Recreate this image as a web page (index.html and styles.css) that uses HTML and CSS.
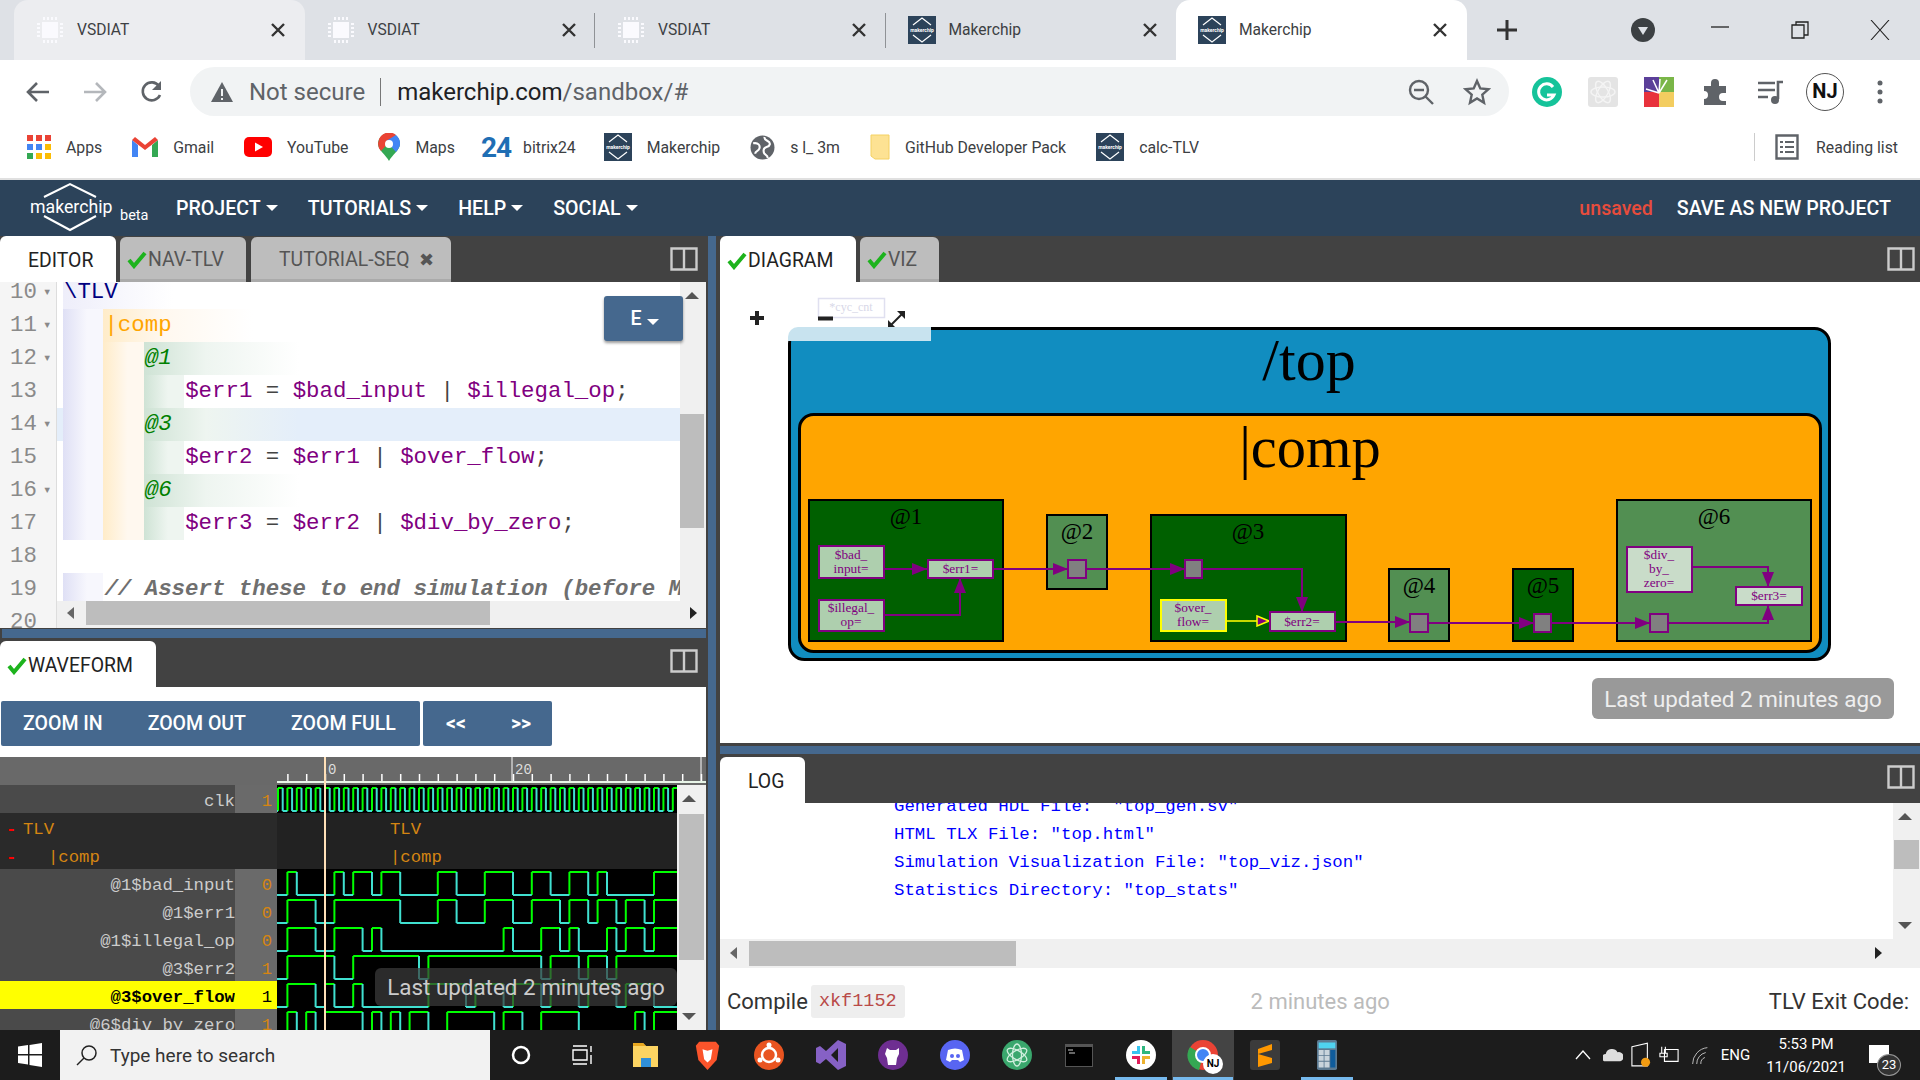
FILE: index.html
```html
<!DOCTYPE html>
<html lang="en">
  <head>
    <meta charset="UTF-8" />
    <title>Makerchip</title>
    <link rel="stylesheet" href="styles.css">
  </head>
  <body>
    <svg class="defs" width="0" height="0">
      <symbol id="mk" viewBox="0 0 28 28">
        <rect width="28" height="28" fill="#2c435a" />
        <path d="M5 9 14 2l9 7M5 19l9 7 9-7" fill="none" stroke="#fff" stroke-width="1.2" />
      </symbol>
      <symbol id="chip" viewBox="0 0 28 28">
        <rect x="6" y="6" width="16" height="16" fill="#fafafe" />
        <path d="M8 1v3m4-3v3m4-3v3m4-3v3M8 24v3m4-3v3m4-3v3m4-3v3M1 8h3m-3 4h3m-3 4h3m-3 4h3M24 8h3m-3 4h3m-3 4h3m-3 4h3" stroke="#fafafe" stroke-width="2" />
      </symbol>
      <symbol id="x" viewBox="0 0 16 16">
        <path d="M2 2 14 14M14 2 2 14" stroke="#333" stroke-width="2.4" />
      </symbol>
      <symbol id="ok" viewBox="0 0 20 20">
        <path d="M2 11l5 6L18 4" fill="none" stroke="#1db31d" stroke-width="4" />
      </symbol>
      <symbol id="split" viewBox="0 0 28 24">
        <path d="M1.5 1.5h25v21h-25zM14 1.5v21" fill="none" stroke="#ccc" stroke-width="2.4" />
      </symbol>
    </svg>

    <div class="tabstrip">
      <div class="ctab hover"><svg class="fav"><use href="#chip" /></svg><span>VSDIAT</span><svg class="cx"><use href="#x" /></svg></div>
      <div class="ctab"><svg class="fav"><use href="#chip" /></svg><span>VSDIAT</span><svg class="cx"><use href="#x" /></svg></div>
      <div class="ctab sep"><svg class="fav"><use href="#chip" /></svg><span>VSDIAT</span><svg class="cx"><use href="#x" /></svg></div>
      <div class="ctab sep"><svg class="fav" viewBox="0 0 28 28"><use href="#mk" /><text x="14" y="16" class="mk-t">makerchip</text></svg><span>Makerchip</span><svg class="cx"><use href="#x" /></svg></div>
      <div class="ctab active"><svg class="fav" viewBox="0 0 28 28"><use href="#mk" /><text x="14" y="16" class="mk-t">makerchip</text></svg><span>Makerchip</span><svg class="cx"><use href="#x" /></svg></div>
      <svg class="newtab" width="24" height="24" viewBox="0 0 24 24"><path d="M12 2v20M2 12h20" stroke="#333" stroke-width="3" /></svg>
      <svg class="tabmenu" width="24" height="24" viewBox="0 0 24 24"><circle cx="12" cy="12" r="12" fill="#3c4043" /><path d="M7 9h10l-5 8z" fill="#dee1e6" /></svg>
      <svg class="winbtn" width="20" height="20" viewBox="0 0 20 20"><path d="M1 7h18" stroke="#222" stroke-width="1.3" /></svg>
      <svg class="winbtn" width="20" height="20" viewBox="0 0 20 20"><path d="M2 5h12v13H2zM6 5V2h12v13h-4" fill="none" stroke="#222" stroke-width="1.3" /></svg>
      <svg class="winbtn" width="20" height="20" viewBox="0 0 20 20"><path d="M1 0l18 20M19 0 1 20" stroke="#222" stroke-width="1.1" /></svg>
    </div>

    <div class="toolbar">
      <svg class="tool first" width="26" height="26" viewBox="0 0 26 26"><path d="M24 13H4M12 4l-9 9 9 9" fill="none" stroke="#5f6368" stroke-width="2.6" /></svg>
      <svg class="tool" width="26" height="26" viewBox="0 0 26 26"><path d="M2 13h20M14 4l9 9-9 9" fill="none" stroke="#b4b7bb" stroke-width="2.6" /></svg>
      <svg class="tool" width="26" height="26" viewBox="0 0 26 26"><path d="M21 16a9 9 0 1 1-1-9" fill="none" stroke="#5f6368" stroke-width="2.6" /><path d="M22 2v9h-9z" fill="#5f6368" /></svg>
      <div class="omni">
        <svg width="24" height="22" viewBox="0 0 24 22"><path d="M12 1 23 21H1z" fill="#5f6368" /><path d="M12 8v7m0 2v2" stroke="#f1f3f4" stroke-width="2" /></svg>
        <span class="notsec">Not secure</span>
        <span class="url">makerchip.com<span class="path">/sandbox/#</span></span>
        <svg class="omni-zoom" width="28" height="28" viewBox="0 0 28 28"><circle cx="12" cy="12" r="9" fill="none" stroke="#5f6368" stroke-width="2.4" /><path d="M7 12h10M18 18l8 8" stroke="#5f6368" stroke-width="2.4" /></svg>
        <svg class="omni-star" width="28" height="28" viewBox="0 0 28 28"><path d="M14 3l3.300 7.500 8 .8-6 5.400 1.700 8L14 20.500 7 24.700l1.700-8-6-5.400 8-.8z" fill="none" stroke="#5f6368" stroke-width="2.4" /></svg>
      </div>
      <svg class="ext" width="30" height="30" viewBox="0 0 30 30"><circle cx="15" cy="15" r="15" fill="#15c39a" /><path d="M21 10a8 8 0 1 0 1 8h-7" fill="none" stroke="#fff" stroke-width="3" /></svg>
      <svg class="ext" width="30" height="30" viewBox="0 0 30 30"><rect width="30" height="30" rx="3" fill="#e4e4e4" /><g fill="none" stroke="#f4f4f4" stroke-width="1.400"><ellipse cx="15" cy="15" rx="12" ry="5" /><ellipse cx="15" cy="15" rx="12" ry="5" transform="rotate(60 15 15)" /><ellipse cx="15" cy="15" rx="12" ry="5" transform="rotate(120 15 15)" /></g></svg>
      <svg class="ext" width="30" height="30" viewBox="0 0 30 30"><rect width="15" height="15" fill="#5b3f99" /><rect x="15" width="15" height="15" fill="#7ab648" /><rect y="15" width="15" height="15" fill="#e8323c" /><rect x="15" y="15" width="15" height="15" fill="#f3cd60" /><path d="M15 16 9 3m6 13 1-14m-1 14 8-13M15 16 2 12" stroke="#fff" stroke-width="1.500" /></svg>
      <svg class="ext" width="30" height="30" viewBox="0 0 30 30"><path d="M4 9h7V6a4 4 0 0 1 8 0v3h7v7h-3a4 4 0 0 0 0 8h3v4H4v-6a4 4 0 0 0 0-8z" fill="#5f6368" /></svg>
      <svg class="ext" width="30" height="30" viewBox="0 0 30 30"><path d="M2 6h17M2 13h17M2 20h10" stroke="#5f6368" stroke-width="2.600" /><path d="M22 22V5h5" fill="none" stroke="#5f6368" stroke-width="2.600" /><circle cx="19" cy="23" r="4" fill="#5f6368" /></svg>
      <div class="avatar">NJ</div>
      <svg class="dots" width="6" height="24" viewBox="0 0 6 24"><circle cx="3" cy="3" r="2.500" fill="#5f6368" /><circle cx="3" cy="12" r="2.500" fill="#5f6368" /><circle cx="3" cy="21" r="2.500" fill="#5f6368" /></svg>
    </div>

    <div class="bookmarks">
      <div class="bm"><svg width="24" height="24" viewBox="0 0 24 24"><path fill="#ea4335" d="M0 0h6v6H0zM9 0h6v6H9zM18 0h6v6h-6z" /><path fill="#4285f4" d="M0 9h6v6H0zM9 9h6v6H9z" /><path fill="#fbbc05" d="M18 9h6v6h-6zM9 18h6v6H9zM18 18h6v6h-6z" /><path fill="#34a853" d="M0 18h6v6H0z" /></svg><span>Apps</span></div>
      <div class="bm"><svg width="26" height="20" viewBox="0 0 26 20"><path d="M0 3v17h6V8z" fill="#4285f4" /><path d="M26 3v17h-6V8z" fill="#34a853" /><path d="M0 3l3-3 10 8L23 0l3 3-13 10z" fill="#ea4335" /></svg><span>Gmail</span></div>
      <div class="bm"><svg width="28" height="20" viewBox="0 0 28 20"><rect width="28" height="20" rx="5" fill="#f00" /><path d="M11 5.500l8 4.500-8 4.500z" fill="#fff" /></svg><span>YouTube</span></div>
      <div class="bm"><svg width="22" height="28" viewBox="0 0 22 28"><path d="M11 0a11 11 0 0 1 11 11c0 6-8 11-11 17C8 22 0 17 0 11A11 11 0 0 1 11 0z" fill="#34a853" /><path d="M3 3a11 11 0 0 1 15-1L3 18a11 11 0 0 1 0-15z" fill="#ea4335" /><path d="M18 2a11 11 0 0 1 4 9c0 3-2 5-4 8L8 8z" fill="#4285f4" /><circle cx="11" cy="11" r="4" fill="#fff" /></svg><span>Maps</span></div>
      <div class="bm bitrix"><b class="b24">24</b><span>bitrix24</span></div>
      <div class="bm"><svg width="28" height="28" viewBox="0 0 28 28"><use href="#mk" /><text x="14" y="16" class="mk-t">makerchip</text></svg><span>Makerchip</span></div>
      <div class="bm"><svg width="25" height="25" viewBox="0 0 24 24"><circle cx="12" cy="12" r="11.500" fill="#5f6368" /><path d="M3 8c5-1 7 2 6 5s-4 2-4 5M14 2c-1 4 6 3 5 7s-6 1-6 6 4 3 4 7" fill="none" stroke="#fff" stroke-width="2" /></svg><span>s l_ 3m</span></div>
      <div class="bm"><svg width="20" height="26" viewBox="0 0 20 26"><path d="M1 1h18v24H5l-4-3z" fill="#fde293" stroke="#f4d162" /></svg><span>GitHub Developer Pack</span></div>
      <div class="bm"><svg width="28" height="28" viewBox="0 0 28 28"><use href="#mk" /><text x="14" y="16" class="mk-t">makerchip</text></svg><span>calc-TLV</span></div>
      <div class="bm reading"><svg width="24" height="26" viewBox="0 0 24 26"><path d="M1.500 1.500h21v23h-21z" fill="none" stroke="#5f6368" stroke-width="2.400" /><path d="M5 8h3m2 0h9M5 13h3m2 0h9M5 18h3m2 0h9" stroke="#5f6368" stroke-width="2" /></svg><span>Reading list</span></div>
    </div>

    <div class="nav">
      <div class="logo">
        <svg width="90" height="50" viewBox="0 0 90 50"><path d="M24 15 50 2l26 13M24 34l26 14 26-14" fill="none" stroke="#fff" stroke-width="2" /></svg>
        <span class="logo-name">makerchip</span>
      </div>
      <span class="beta">beta</span>
      <a class="nav-item">PROJECT<i class="caret"></i></a>
      <a class="nav-item">TUTORIALS<i class="caret"></i></a>
      <a class="nav-item">HELP<i class="caret"></i></a>
      <a class="nav-item">SOCIAL<i class="caret"></i></a>
      <span class="unsaved">unsaved</span>
      <a class="nav-save">SAVE AS NEW PROJECT</a>
    </div>

    <div class="main">
      <div class="col-left">
        <div class="tabbar">
          <div class="mtab on w-editor">EDITOR</div>
          <div class="mtab w-nav"><svg class="ok"><use href="#ok" /></svg>NAV-TLV</div>
          <div class="mtab w-seq">TUTORIAL-SEQ<span class="seq-x">✖</span></div>
          <svg class="split"><use href="#split" /></svg>
        </div>

        <div class="editor">
          <div class="line"><span class="ln">10<i>▾</i></span><span class="ind first grad-tlv kw-tlv">\TLV</span></div>
          <div class="line"><span class="ln">11<i>▾</i></span><span class="ind first tlv"></span><span class="ind grad-pipe kw-pipe">|comp</span></div>
          <div class="line"><span class="ln">12<i>▾</i></span><span class="ind first tlv"></span><span class="ind pipe"></span><span class="ind grad-stage kw-stage">@1</span></div>
          <div class="line"><span class="ln">13</span><span class="ind first tlv"></span><span class="ind pipe"></span><span class="ind stage"></span><span class="code"><em>$err1</em> = <em>$bad_input</em> | <em>$illegal_op</em>;</span></div>
          <div class="line cur"><span class="ln">14<i>▾</i></span><span class="ind first tlv"></span><span class="ind pipe"></span><span class="ind grad-stage kw-stage">@3</span></div>
          <div class="line"><span class="ln">15</span><span class="ind first tlv"></span><span class="ind pipe"></span><span class="ind stage"></span><span class="code"><em>$err2</em> = <em>$err1</em> | <em>$over_flow</em>;</span></div>
          <div class="line"><span class="ln">16<i>▾</i></span><span class="ind first tlv"></span><span class="ind pipe"></span><span class="ind grad-stage kw-stage">@6</span></div>
          <div class="line"><span class="ln">17</span><span class="ind first tlv"></span><span class="ind pipe"></span><span class="ind stage"></span><span class="code"><em>$err3</em> = <em>$err2</em> | <em>$div_by_zero</em>;</span></div>
          <div class="line"><span class="ln">18</span></div>
          <div class="line"><span class="ln">19</span><span class="ind first tlv"></span><span class="comment">// Assert these to end simulation (before Makerchip cycle limit).</span></div>
          <div class="line"><span class="ln">20</span></div>
          <div class="vbar ed-v"><i class="up"></i><b></b></div>
          <div class="hbar ed-h"><i class="lt"></i><b></b><i class="rt"></i></div>
          <button class="ebtn">E<i class="caret"></i></button>
        </div>

        <div class="hsplit"></div>

        <div class="tabbar short">
          <div class="mtab on w-wave"><svg class="ok"><use href="#ok" /></svg>WAVEFORM</div>
          <svg class="split"><use href="#split" /></svg>
        </div>

        <div class="wavepane">
          <div class="wave-btns">
            <div class="btn-group"><a>ZOOM IN</a><a>ZOOM OUT</a><a>ZOOM FULL</a></div>
            <div class="btn-group two"><a>&lt;&lt;</a><a>&gt;&gt;</a></div>
          </div>
          <div class="wave">
            <div class="ruler">
              <svg width="429" height="26" viewBox="0 0 429 26" id="ruler"></svg>
            </div>
            <div id="rows"></div>
            <div class="cursor"></div>
            <div class="vbar wf-v"><i class="up"></i><b></b><i class="down"></i></div>
            <div class="toast dark">Last updated 2 minutes ago</div>
          </div>
        </div>
      </div>

      <div class="vsplit"></div>

      <div class="col-right">
        <div class="tabbar">
          <div class="mtab on w-diag"><svg class="ok"><use href="#ok" /></svg>DIAGRAM</div>
          <div class="mtab w-viz"><svg class="ok"><use href="#ok" /></svg>VIZ</div>
          <svg class="split"><use href="#split" /></svg>
        </div>

        <div class="diagram">
          <svg class="graph" width="1200" height="460" viewBox="720 282 1200 460">
            <defs>
              <marker id="arr" markerWidth="15" markerHeight="12" refX="15" refY="6" orient="auto" markerUnits="userSpaceOnUse"><path d="M0 0 15 6 0 12z" fill="#800080" /></marker>
              <marker id="arry" markerWidth="14" markerHeight="12" refX="14" refY="6" orient="auto" markerUnits="userSpaceOnUse"><path d="M1 1 13 6 1 11z" fill="#800080" stroke="#ff0" stroke-width="1.500" /></marker>
            </defs>
            <path d="M750 318h14M757 311v14" stroke="#222" stroke-width="4" />
            <rect x="818.500" y="298.500" width="66" height="19" fill="#fff" stroke="#e0e0f0" stroke-width="1.500" />
            <text x="851" y="311" class="cyc">*cyc_cnt</text>
            <path d="M818 318.500h15" stroke="#222" stroke-width="4" />
            <path d="M889 327l15-15" stroke="#222" stroke-width="2" /><path d="M888 328v-8l8 8zM905 311v8l-8-8z" fill="#222" />

            <rect x="789.500" y="328.500" width="1040" height="331" rx="15" fill="#118dc0" stroke="#000" stroke-width="3" />
            <path d="M788 341v-4a10 10 0 0 1 10-10h133v14z" fill="#c8e3ef" />
            <text x="1309" y="380" class="t-top">/top</text>
            <rect x="799.500" y="414.500" width="1021" height="237" rx="14" fill="#ffa500" stroke="#000" stroke-width="3" />
            <text x="1310" y="467" class="t-top comp">|comp</text>

            <rect x="809" y="500" width="194" height="141" class="st" />
            <rect x="1047" y="515" width="60" height="74" class="st lite" />
            <rect x="1151" y="515" width="195" height="126" class="st" />
            <rect x="1389" y="569" width="60" height="72" class="st lite" />
            <rect x="1513" y="569" width="60" height="72" class="st" />
            <rect x="1617" y="500" width="194" height="141" class="st lite" />
            <text x="906" y="524" class="stage">@1</text>
            <text x="1077" y="539" class="stage">@2</text>
            <text x="1248" y="539" class="stage">@3</text>
            <text x="1419" y="593" class="stage">@4</text>
            <text x="1543" y="593" class="stage">@5</text>
            <text x="1714" y="524" class="stage">@6</text>

            <g fill="none" stroke="#800080" stroke-width="2">
              <path d="M884 569H927" marker-end="url(#arr)" />
              <path d="M884 615H960V578" marker-end="url(#arr)" />
              <path d="M993 569H1068" marker-end="url(#arr)" />
              <path d="M1086 569H1185" marker-end="url(#arr)" />
              <path d="M1202 569H1302V612" marker-end="url(#arr)" />
              <path d="M1335 622H1410" marker-end="url(#arr)" />
              <path d="M1428 623H1534" marker-end="url(#arr)" />
              <path d="M1551 623H1650" marker-end="url(#arr)" />
              <path d="M1668 623H1768V605" marker-end="url(#arr)" />
              <path d="M1692 567H1768V587" marker-end="url(#arr)" />
              <path d="M1226 621H1270" stroke="#c8d800" marker-end="url(#arry)" />
            </g>

            <rect x="819" y="546" width="65" height="32" class="nd" />
            <rect x="928" y="560" width="65" height="18" class="nd" />
            <rect x="819" y="600" width="65" height="31" class="nd" />
            <rect x="1161" y="600" width="65" height="31" class="nd yel" />
            <rect x="1270" y="612" width="65" height="19" class="nd" />
            <rect x="1627" y="547" width="65" height="45" class="nd pale" />
            <rect x="1736" y="587" width="66" height="18" class="nd pale" />
            <rect x="1068" y="560" width="18" height="18" class="sq" />
            <rect x="1185" y="560" width="17" height="18" class="sq" />
            <rect x="1410" y="614" width="18" height="18" class="sq" />
            <rect x="1534" y="614" width="17" height="18" class="sq" />
            <rect x="1650" y="614" width="18" height="18" class="sq" />

            <text x="851" y="559" class="lbl">$bad_</text><text x="851" y="573" class="lbl">input=</text>
            <text x="960.500" y="573" class="lbl">$err1=</text>
            <text x="851" y="612" class="lbl">$illegal_</text><text x="851" y="626" class="lbl">op=</text>
            <text x="1193" y="612" class="lbl">$over_</text><text x="1193" y="626" class="lbl">flow=</text>
            <text x="1302" y="626" class="lbl">$err2=</text>
            <text x="1659" y="559" class="lbl">$div_</text><text x="1659" y="573" class="lbl">by_</text><text x="1659" y="587" class="lbl">zero=</text>
            <text x="1769" y="600" class="lbl">$err3=</text>
          </svg>
          <div class="toast light">Last updated 2 minutes ago</div>
        </div>

        <div class="hsplit wide"></div>

        <div class="tabbar short">
          <div class="mtab on w-log">LOG</div>
          <svg class="split"><use href="#split" /></svg>
        </div>

        <div class="log">
          <pre class="log-text">Generated HDL File:  "top_gen.sv"
HTML TLX File: "top.html"
Simulation Visualization File: "top_viz.json"
Statistics Directory: "top_stats"</pre>
          <div class="vbar log-v"><i class="up"></i><b></b><i class="down"></i></div>
          <div class="hbar log-h"><i class="lt"></i><b></b><i class="rt"></i></div>
        </div>

        <div class="status">
          <span>Compile</span><code>xkf1152</code>
          <span class="ago">2 minutes ago</span>
          <span class="exit">TLV Exit Code:</span>
        </div>
      </div>
    </div>

    <div class="taskbar">
      <svg class="win" width="24" height="24" viewBox="0 0 24 24"><path d="M0 3.500l10-1.400V11H0zM11.500 2 24 0v11H11.500zM0 12.500h10v9L0 20zM11.500 12.500H24V24l-12.500-2z" fill="#fff" /></svg>
      <div class="search">
        <svg width="22" height="22" viewBox="0 0 22 22"><circle cx="13" cy="9" r="7" fill="none" stroke="#222" stroke-width="1.500" /><path d="M8 14 1 21" stroke="#222" stroke-width="1.500" /></svg>
        <span>Type here to search</span>
      </div>
      <div class="tb"><svg width="22" height="22" viewBox="0 0 22 22"><circle cx="11" cy="11" r="8" fill="none" stroke="#fff" stroke-width="2.500" /></svg></div>
      <div class="tb"><svg width="22" height="22" viewBox="0 0 22 22"><path d="M1 6h14v10H1zM1 2h14M1 20h14M19 2v6M19 11v9" fill="none" stroke="#fff" stroke-width="1.400" /></svg></div>
      <div class="tb"><svg width="27" height="24" viewBox="0 0 27 24"><path d="M1 0h10l3 3h12v21H1z" fill="#fcd462" /><path d="M1 0h10l3 3H1z" fill="#e8a820" /><path d="M9 24V15h10v9z" fill="#2f8fd8" /></svg></div>
      <div class="tb"><svg width="27" height="30" viewBox="0 0 30 36"><path d="M5 2h20l4 5-3 17-11 12L4 24 1 7z" fill="#fb542b" /><path d="M9 11l6 2 6-2-2 12-4 4-4-4z" fill="#fff" /></svg></div>
      <div class="tb"><svg width="30" height="30" viewBox="0 0 30 30"><circle cx="15" cy="15" r="15" fill="#e95420" /><circle cx="15" cy="15" r="7" fill="none" stroke="#fff" stroke-width="2.500" /><circle cx="15" cy="5" r="2.500" fill="#fff" /><circle cx="6" cy="20" r="2.500" fill="#fff" /><circle cx="24" cy="20" r="2.500" fill="#fff" /></svg></div>
      <div class="tb"><svg width="30" height="30" viewBox="0 0 30 30"><path d="M22 0 30 4v22l-8 4-12-11-6 5-4-2V8l4-2 6 5zM22 8l-7 7 7 7z" fill="#8661c5" /></svg></div>
      <div class="tb"><svg width="30" height="30" viewBox="0 0 30 30"><circle cx="15" cy="15" r="15" fill="#6e2e91" /><path d="M9 8l3 2h6l3-2v6l-2 4 -1 7h-8l-1-7-2-4z" fill="#fff" /></svg></div>
      <div class="tb"><svg width="30" height="30" viewBox="0 0 30 30"><circle cx="15" cy="15" r="15" fill="#5865f2" /><path d="M8 10q7-3 14 0l2 10-4 2-2-2h-6l-2 2-4-2z" fill="#fff" /><circle cx="12" cy="16" r="2" fill="#5865f2" /><circle cx="18" cy="16" r="2" fill="#5865f2" /></svg></div>
      <div class="tb"><svg width="30" height="30" viewBox="0 0 30 30"><circle cx="15" cy="15" r="15" fill="#3aa76d" /><g fill="none" stroke="#cfeedd" stroke-width="1.300"><ellipse cx="15" cy="15" rx="11" ry="4.500" transform="rotate(30 15 15)" /><ellipse cx="15" cy="15" rx="11" ry="4.500" transform="rotate(90 15 15)" /><ellipse cx="15" cy="15" rx="11" ry="4.500" transform="rotate(150 15 15)" /></g></svg></div>
      <div class="tb"><svg width="28" height="23" viewBox="0 0 28 23"><rect width="28" height="23" fill="#555" /><rect x="1" y="3" width="26" height="19" fill="#000" /><path d="M3 6h5M4 9h6" stroke="#ccc" /></svg></div>
      <div class="tb run"><svg width="30" height="30" viewBox="0 0 30 30"><circle cx="15" cy="15" r="15" fill="#fff" /><rect x="6" y="11" width="8" height="3" fill="#36c5f0" /><rect x="11" y="6" width="3" height="5" fill="#36c5f0" /><rect x="16" y="6" width="3" height="8" fill="#2eb67d" /><rect x="19" y="11" width="5" height="3" fill="#2eb67d" /><rect x="16" y="16" width="8" height="3" fill="#ecb22e" /><rect x="16" y="19" width="3" height="5" fill="#ecb22e" /><rect x="11" y="16" width="3" height="8" fill="#e01e5a" /><rect x="6" y="16" width="5" height="3" fill="#e01e5a" /></svg></div>
      <div class="tb run focus">
        <svg width="32" height="32" viewBox="0 0 32 32"><circle cx="16" cy="16" r="15" fill="#ea4335" /><path d="M16 16 3 8a15 15 0 0 0 9 23z" fill="#34a853" /><circle cx="16" cy="16" r="7" fill="#4285f4" stroke="#fff" stroke-width="2" /></svg>
        <span class="nj-mini">NJ</span>
      </div>
      <div class="tb"><svg width="30" height="30" viewBox="0 0 30 30"><rect width="30" height="30" rx="3" fill="#3b3b3b" /><path d="M22 5v6L8 15v-5zM8 15l14 4v5L8 28v-5" fill="#ff9800" transform="translate(0 -1)" /></svg></div>
      <div class="tb run"><svg width="24" height="30" viewBox="0 0 24 36"><rect width="24" height="36" rx="2" fill="#5c7a92" /><rect x="2" y="3" width="20" height="7" fill="#4fd2f0" /><path d="M2 12h6v6H2zM9 12h6v6H9zM2 19h6v6H2zM9 19h6v6H9zM2 26h6v7H2zM9 26h6v7H9z" fill="#c9d4dc" /><path d="M16 12h6v21h-6z" fill="#0f5c9c" /></svg></div>

      <div class="tray">
        <svg width="16" height="10" viewBox="0 0 16 10"><path d="M1 9l7-8 7 8" fill="none" stroke="#fff" stroke-width="1.300" /></svg>
        <svg class="tray-tight" width="20" height="16" viewBox="0 0 22 16"><path d="M3 15a4 4 0 0 1 0-8 7 7 0 0 1 13-2 5 5 0 0 1 3 10z" fill="#ddd" /></svg>
        <svg class="tray-tight" width="20" height="26" viewBox="0 0 22 28"><path d="M1 5 18 1v25H1z" fill="none" stroke="#fff" stroke-width="1.200" /><circle cx="16" cy="22" r="5" fill="#f39c12" /></svg>
        <svg width="20" height="20" viewBox="0 0 22 20"><path d="M6 4h15v13H6zM3 1v7M7 1v7M1 8h8v4H1z" fill="none" stroke="#fff" stroke-width="1.200" /></svg>
        <svg width="18" height="22" viewBox="0 0 22 24"><path d="M2 23a20 20 0 0 1 18-20M7 23a14 14 0 0 1 11-14M12 23a8 8 0 0 1 5-8" fill="none" stroke="#bbb" stroke-width="1.200" /></svg>
        <span class="lang">ENG</span>
        <div class="clock"><span>5:53 PM</span><span>11/06/2021</span></div>
        <div class="notif"><span class="note"></span><span class="count">23</span></div>
      </div>
    </div>

    <script src="wave.js"></script>
  </body>
</html>
```

FILE: styles.css
```css
* {
  box-sizing: border-box;
}

html,
body {
  margin: 0;
  width: 1920px;
  height: 1080px;
  overflow: hidden;
}

body {
  font-family: Roboto, sans-serif;
  background-color: white;
}

.defs {
  position: absolute;
}

.mk-t {
  font-family: Roboto, sans-serif;
  font-size: 5px;
  font-weight: 700;
  fill: white;
  text-anchor: middle;
}

/* browser chrome */
.tabstrip {
  display: flex;
  align-items: center;
  height: 60px;
  padding-left: 14px;
  background-color: #dee1e6;
}

.ctab {
  display: flex;
  align-items: center;
  position: relative;
  width: 290.5px;
  height: 60px;
  padding-left: 22px;
  font-size: 15.6px;
  color: #3c4043;
}

.ctab.hover {
  background-color: #ecedf0;
  border-radius: 14px 14px 0 0;
}

.ctab.active {
  background-color: white;
  border-radius: 14px 14px 0 0;
}

.ctab.sep::before {
  content: '';
  position: absolute;
  left: -1px;
  top: 13px;
  height: 35px;
  width: 1px;
  background-color: #8f9296;
}

.fav {
  width: 28px;
  height: 28px;
  margin-right: 13px;
}

.cx {
  position: absolute;
  left: 256px;
  top: 22px;
  width: 16px;
  height: 16px;
}

.newtab {
  margin-left: 28px;
}

.tabmenu {
  margin-left: 112px;
}

.winbtn {
  margin-left: 60px;
}

.tabmenu + .winbtn {
  margin-left: 55px;
}

.toolbar {
  display: flex;
  align-items: center;
  height: 58px;
  padding-top: 5px;
}

.tool {
  margin-left: 31px;
}

.tool.first {
  margin-left: 25px;
}

.omni {
  display: flex;
  align-items: center;
  width: 1319px;
  height: 49px;
  margin-left: 25px;
  padding-left: 20px;
  border-radius: 25px;
  background-color: #f1f3f4;
  font-size: 24px;
  position: relative;
}

.notsec {
  margin-left: 15px;
  padding-right: 15px;
  border-right: 1px solid #777;
  color: #5f6368;
  line-height: 28px;
}

.url {
  margin-left: 16px;
  color: #202124;
}

.path {
  color: #5f6368;
}

.omni-zoom {
  margin-left: auto;
}

.omni-star {
  margin: 0 18px 0 28px;
}

.ext {
  margin-left: 26px;
}

.omni + .ext {
  margin-left: 23px;
}

.avatar {
  width: 38px;
  height: 38px;
  margin-left: 20px;
  border: 1.5px solid #555;
  border-radius: 50%;
  font-size: 20px;
  font-weight: 700;
  line-height: 35px;
  text-align: center;
  color: #111;
}

.dots {
  margin-left: 33px;
}

.bookmarks {
  display: flex;
  align-items: center;
  gap: 30px;
  height: 62px;
  padding: 0 22px 2px 27px;
  border-bottom: 2px solid #e0e0e0;
  font-size: 15.8px;
  color: #3c4043;
}

.bm {
  display: flex;
  align-items: center;
  gap: 15px;
}

.bitrix {
  margin: 0 -2px 0 -4px;
  gap: 12px;
}

.b24 {
  font-size: 28px;
  color: #1f6eb4;
  letter-spacing: -1px;
}

.reading {
  margin-left: auto;
  padding-left: 20px;
  height: 28px;
  gap: 17px;
  border-left: 1px solid #ccc;
}

/* makerchip nav */
.nav {
  display: flex;
  align-items: center;
  height: 56px;
  background-color: #2c435a;
  color: white;
  position: relative;
}

.logo {
  position: relative;
  width: 100px;
  height: 48px;
  margin-left: 20px;
}

.logo svg {
  position: absolute;
  left: 0;
  top: -2px;
}

.logo-name {
  position: absolute;
  left: 10px;
  top: 13px;
  font-size: 17.7px;
}

.beta {
  width: 56px;
  margin-top: 14px;
  font-size: 14.5px;
}

.nav-item {
  display: flex;
  align-items: center;
  margin-right: 30px;
  font-size: 19.6px;
  font-weight: 500;
}

.caret {
  display: inline-block;
  margin-left: 5px;
  border-top: 6px solid currentColor;
  border-left: 6px solid transparent;
  border-right: 6px solid transparent;
}

.unsaved {
  margin-left: auto;
  font-size: 19.6px;
  font-weight: 500;
  color: #e74c3c;
}

.nav-save {
  margin: 0 29px 0 24px;
  font-size: 19.6px;
  font-weight: 500;
}

/* panes */
.main {
  display: flex;
  height: 794px;
  background-color: #424242;
}

.col-left {
  width: 706px;
  display: flex;
  flex-direction: column;
}

.vsplit {
  width: 8px;
  margin: 0 4px 0 2px;
  background-color: #45688e;
}

.col-right {
  flex: 1;
  display: flex;
  flex-direction: column;
}

.tabbar {
  display: flex;
  align-items: flex-end;
  gap: 4px;
  flex: none;
  height: 46px;
  position: relative;
  background-color: #424242;
}

.tabbar.short {
  height: 49px;
}

.mtab {
  display: flex;
  align-items: center;
  height: 45px;
  padding-top: 2px;
  padding-left: 7px;
  background-color: #bdbdbd;
  border-bottom: 3px solid #aaa;
  border-radius: 6px 6px 0 0;
  font-size: 19.4px;
  color: #555;
}

.mtab.on {
  height: 46px;
  background-color: white;
  border-bottom: 0;
  color: #222;
}

.w-editor {
  width: 116px;
  padding-left: 28px;
}

.w-nav {
  width: 126px;
}

.w-seq {
  width: 200px;
  margin-left: 1px;
  padding-left: 28px;
}

.w-wave {
  width: 156px;
}

.w-diag {
  width: 136px;
}

.w-viz {
  width: 79px;
}

.w-log {
  width: 85px;
  padding-left: 28px;
}

.ok {
  width: 20px;
  height: 20px;
  margin-right: 1px;
  flex: none;
}

.seq-x {
  margin-left: 9px;
  font-size: 18px;
}

.split {
  position: absolute;
  right: 8px;
  top: 11px;
  width: 28px;
  height: 24px;
}

.col-right .split {
  right: 5px;
}

/* editor */
.editor {
  position: relative;
  height: 346px;
  flex: none;
  overflow: hidden;
  background-color: white;
  font-family: 'Liberation Mono', monospace;
  font-size: 22.4px;
}

.line {
  display: flex;
  align-items: stretch;
  height: 33px;
  line-height: 33px;
  position: relative;
  top: -6px;
}

.line.cur {
  background-color: #e4eefa;
}

.ln {
  width: 57px;
  margin-right: 6px;
  padding-left: 10px;
  background-color: #f5f5f5;
  border-right: 1px solid #ddd;
  color: #8a8a8a;
  flex: none;
}

.ln i {
  font-style: normal;
  font-size: 14px;
  margin-left: 6px;
  vertical-align: 2px;
}

.ind {
  width: 40.4px;
  flex: none;
  white-space: nowrap;
}

.tlv {
  background: linear-gradient(to right, #dfe0f5, #f7f7fd 60%);
}

.pipe {
  background: linear-gradient(to right, #ffecc9, #fff8ef 60%);
}

.stage {
  background: linear-gradient(to right, #cfe3d5, #eef5f0 60%);
}

.grad-tlv {
  width: 110px;
  padding-left: 1px;
  background: linear-gradient(to right, #eeeefa, white);
}

.grad-pipe {
  width: 150px;
  background: linear-gradient(to right, #ffecc9, #fff8ef 40%, transparent);
}

.grad-stage {
  width: 155px;
  background: linear-gradient(to right, #cfe3d5, #eef5f0 40%, transparent);
}

.kw-tlv {
  color: #000080;
}

.kw-pipe {
  padding-left: 1px;
  color: #ffa500;
}

.kw-stage {
  padding-left: 1px;
  color: #008000;
  font-style: italic;
}

.code {
  padding-left: 1px;
  color: #444;
  white-space: pre;
}

.code em {
  font-style: normal;
  color: #800080;
}

.comment {
  padding-left: 1px;
  font-style: italic;
  font-weight: 700;
  color: #6f6f6f;
  white-space: pre;
}

.ebtn {
  position: absolute;
  left: 604px;
  top: 14px;
  width: 79px;
  height: 45px;
  padding: 0 0 0 2px;
  border: none;
  border-radius: 3px;
  background-color: #45688e;
  box-shadow: 0 2px 3px rgba(0, 0, 0, 0.4);
  color: white;
  font-family: Roboto, sans-serif;
  font-size: 19.6px;
  font-weight: 500;
}

/* scrollbars */
.vbar,
.hbar {
  position: absolute;
  background-color: #f0f0f0;
}

.vbar b,
.hbar b {
  position: absolute;
  background-color: #bdbdbd;
}

.up,
.down,
.lt,
.rt {
  position: absolute;
  width: 0;
  height: 0;
}

.up {
  top: 10px;
  left: 5px;
  border-bottom: 7px solid #555;
  border-left: 7px solid transparent;
  border-right: 7px solid transparent;
}

.down {
  bottom: 10px;
  left: 5px;
  border-top: 7px solid #555;
  border-left: 7px solid transparent;
  border-right: 7px solid transparent;
}

.lt {
  left: 10px;
  top: 6px;
  border-right: 7px solid #666;
  border-top: 6px solid transparent;
  border-bottom: 6px solid transparent;
}

.rt {
  right: 9px;
  top: 6px;
  border-left: 7px solid #222;
  border-top: 6px solid transparent;
  border-bottom: 6px solid transparent;
}

.ed-v {
  left: 680px;
  top: 0;
  width: 26px;
  height: 346px;
}

.ed-v b {
  left: 0;
  top: 132px;
  width: 24px;
  height: 114px;
}

.ed-h {
  left: 57px;
  top: 319px;
  width: 649px;
  height: 27px;
}

.ed-h b {
  left: 29px;
  top: 0;
  width: 404px;
  height: 24px;
}

.hsplit {
  height: 9px;
  margin: 1px 0 0 2px;
  flex: none;
  background-color: #45688e;
}

.hsplit.wide {
  height: 8px;
  margin: 3px 0 0;
}

/* waveform */
.wavepane {
  flex: 1;
  background-color: white;
  overflow: hidden;
}

.wave-btns {
  display: flex;
  gap: 3px;
  height: 70px;
  padding: 14px 0 0 1px;
}

.btn-group {
  display: flex;
  align-items: center;
  gap: 45px;
  width: 419px;
  height: 45px;
  padding-left: 22px;
  border-radius: 2px;
  background-color: #45688e;
  color: white;
  font-size: 19.5px;
  font-weight: 500;
}

.btn-group.two {
  width: 129px;
  padding-left: 23px;
  font-weight: 700;
}

.wave {
  position: relative;
  height: 273px;
  overflow: hidden;
  background-color: #4a4a4a;
  font-family: 'Liberation Mono', monospace;
  font-size: 17.3px;
}

.ruler {
  height: 28px;
  padding-left: 277px;
  background-color: #696969;
}

.ruler text {
  font-size: 14px;
  fill: #ddd;
}

.row {
  display: flex;
  height: 28px;
  line-height: 33px;
  color: #ccc;
}

.row .name {
  width: 235px;
  text-align: right;
  white-space: pre;
}

.row .val {
  width: 42px;
  padding-right: 5px;
  text-align: right;
  background-color: #6a6a6a;
  color: #d58512;
}

.row svg {
  background-color: black;
}

.row.sel .name,
.row.sel .val {
  background-color: #ff0;
  color: black;
}

.row.sel .name {
  font-weight: 700;
}

.row.group {
  background-color: #2a2a2a;
  color: #d58512;
}

.row.group .g-left {
  display: flex;
  width: 277px;
  padding-left: 6px;
  white-space: pre;
}

.row.group i {
  width: 17px;
  font-style: normal;
  font-weight: 700;
  color: #f00;
}

.row.group .deep {
  margin-left: 25px;
}

.row.group .g-right {
  flex: 1;
  padding-left: 113px;
  background-color: #222;
  white-space: pre;
}

.cursor {
  position: absolute;
  left: 324px;
  top: 0;
  width: 2px;
  height: 273px;
  background-color: #ffe0b8;
}

.wf-v {
  left: 677px;
  top: 28px;
  width: 29px;
  height: 245px;
}

.wf-v b {
  left: 2px;
  top: 29px;
  width: 25px;
  height: 146px;
}

.toast {
  position: absolute;
  display: flex;
  align-items: center;
  justify-content: center;
  font-family: Roboto, sans-serif;
  font-size: 22.4px;
  border-radius: 6px;
}

.toast.dark {
  left: 375px;
  top: 211px;
  width: 302px;
  height: 38px;
  background-color: rgba(60, 60, 60, 0.72);
  color: #ccc;
}

.toast.light {
  left: 872px;
  top: 396px;
  width: 302px;
  height: 41px;
  background-color: #999;
  color: #eee;
}

/* diagram */
.diagram {
  position: relative;
  height: 461px;
  flex: none;
  background-color: white;
  overflow: hidden;
}

.graph {
  display: block;
}

.graph text {
  font-family: 'Liberation Serif', serif;
  text-anchor: middle;
}

.graph .cyc {
  font-size: 12px;
  fill: #d8d8e8;
}

.graph .t-top {
  font-size: 60px;
}

.graph .comp {
  font-size: 58.5px;
}

.graph .stage {
  font-size: 23px;
  fill: #000;
  background: none;
}

.graph .lbl {
  font-size: 13.3px;
  fill: #800080;
}

.st {
  fill: #006000;
  stroke: #000;
  stroke-width: 2;
}

.st.lite {
  fill: #528f52;
}

.nd {
  fill: #aecfae;
  stroke: #800080;
  stroke-width: 2;
}

.nd.yel {
  stroke: #ff0;
}

.nd.pale {
  fill: #c9dcc9;
}

.sq {
  fill: #808080;
  stroke: #800080;
  stroke-width: 2;
}

/* log */
.log {
  position: relative;
  height: 165px;
  flex: none;
  background-color: white;
  overflow: hidden;
}

.log-text {
  margin: -10px 0 0 174px;
  font-family: 'Liberation Mono', monospace;
  font-size: 17.4px;
  line-height: 28px;
  color: #00f;
}

.log-v {
  right: 0;
  top: 0;
  width: 27px;
  height: 136px;
}

.log-v b {
  left: 1px;
  top: 37px;
  width: 25px;
  height: 29px;
}

.log-h {
  left: 0;
  top: 136px;
  width: 1200px;
  height: 29px;
}

.log-h b {
  left: 29px;
  top: 2px;
  width: 267px;
  height: 25px;
}

.log-h .rt {
  right: 38px;
  top: 8px;
}

.log-h .lt {
  top: 8px;
}

.status {
  display: flex;
  align-items: center;
  flex: 1;
  padding: 4px 11px 0 7px;
  background-color: white;
  font-size: 22px;
  color: #333;
}

.status code {
  margin-left: 3px;
  padding: 6px 8px;
  border-radius: 3px;
  background-color: #eee;
  font-family: 'Liberation Mono', monospace;
  font-size: 18.5px;
  color: #b94a48;
}

.ago {
  margin-left: 346px;
  color: #bbb;
}

.exit {
  margin-left: auto;
}

/* windows taskbar */
.taskbar {
  display: flex;
  align-items: center;
  height: 50px;
  background-color: #1c1c1c;
}

.win {
  margin-left: 18px;
  flex: none;
}

.search {
  display: flex;
  align-items: center;
  gap: 12px;
  width: 430px;
  height: 50px;
  margin-left: 18px;
  padding-left: 16px;
  background-color: #f2f2f2;
  font-size: 19px;
  color: #333;
}

.tb {
  position: relative;
  display: flex;
  align-items: center;
  justify-content: center;
  flex: none;
  width: 62px;
  height: 50px;
}

.tb.run::after {
  content: '';
  position: absolute;
  left: 5px;
  right: 5px;
  bottom: 0;
  height: 3px;
  background-color: #76b9ed;
}

.tb.focus {
  background-color: #444;
}

.tb.focus::after {
  left: 1px;
  right: 1px;
}

.nj-mini {
  position: absolute;
  right: 11px;
  bottom: 6px;
  width: 20px;
  height: 20px;
  border-radius: 50%;
  background-color: white;
  font-size: 10px;
  font-weight: 700;
  line-height: 20px;
  text-align: center;
}

.tray {
  display: flex;
  align-items: center;
  gap: 12px;
  margin-left: auto;
  padding-right: 18px;
  color: white;
}

.tray-tight {
  margin-right: -4px;
}

.lang {
  font-size: 15px;
}

.clock {
  display: flex;
  flex-direction: column;
  align-items: center;
  gap: 3px;
  margin-left: 4px;
  font-size: 15px;
  line-height: 20px;
}

.notif {
  position: relative;
  width: 42px;
  height: 50px;
  margin-left: 2px;
}

.note {
  position: absolute;
  left: 9px;
  top: 15px;
  width: 20px;
  height: 18px;
  background-color: white;
}

.count {
  position: absolute;
  left: 17px;
  top: 24px;
  width: 24px;
  height: 22px;
  border: 1px solid #999;
  border-radius: 50%;
  background-color: #333;
  font-size: 13px;
  line-height: 20px;
  text-align: center;
}
```

FILE: wave.js
```js
// builds the waveform rows, values are toggle cycles starting from low
const cycleW = 9.4;
const zeroX = 48;
const hiY = 3;
const loY = 26;

const clk = [];
for (let t = -5; t < 38; t += 0.5) clk.push(t);

const rows = [
  { name: 'clk', val: '1', toggles: clk },
  { group: '<span>TLV</span>', right: 'TLV' },
  { group: '<span class="deep">|comp</span>', right: '|comp' },
  { name: '@1$bad_input', val: '0', toggles: [-4, -3, 1, 2, 3, 5, 6, 8, 12, 14, 17, 20, 22, 24, 26, 28, 29, 30, 35] },
  { name: '@1$err1', val: '0', toggles: [-4, -1, 1, 8, 12, 14, 17, 20, 22, 25, 26, 28, 29, 31, 32, 34, 35] },
  { name: '@1$illegal_op', val: '0', toggles: [-4, -1, 1, 4, 5, 6, 19, 20, 23, 25, 26, 27, 30, 31, 32, 34, 35] },
  { name: '@3$err2', val: '1', toggles: [-4, 1, 3, 10, 11, 23, 24, 27, 28, 30, 31] },
  { name: '@3$over_flow', val: '1', sel: true, toggles: [-4, -1, 0, 1, 3, 4, 11, 15, 16, 19, 20, 23, 24, 27, 28, 31, 32, 35] },
  { name: '@6$div_by_zero', val: '1', toggles: [-4, -3, -2, -1, 0, 4, 5, 6, 7, 8, 9, 11, 13, 18, 19, 21, 23, 27, 33, 34, 35] },
];

function wavePaths(toggles) {
  let high = '';
  let low = '';
  let x = 0;
  let up = false;
  toggles.forEach((t) => {
    const nx = zeroX + t * cycleW;
    if (nx < 0 || nx > 400) return;
    if (up) {
      high += `M${x} ${hiY}H${nx}`;
      low += `M${nx} ${hiY}V${loY}`;
    } else {
      low += `M${x} ${loY}H${nx}`;
      high += `M${nx} ${loY}V${hiY}`;
    }
    x = nx;
    up = !up;
  });
  if (up) high += `M${x} ${hiY}H400`;
  else low += `M${x} ${loY}H400`;
  return `<path d="${high}" fill="none" stroke="#0f0" stroke-width="2"/><path d="${low}" fill="none" stroke="#40e0d0" stroke-width="2"/>`;
}

document.getElementById('rows').innerHTML = rows
  .map((r) => {
    if (r.group) {
      return `<div class="row group"><span class="g-left"><i>-</i>${r.group}</span><span class="g-right">${r.right}</span></div>`;
    }
    const svg = `<svg width="400" height="28">${wavePaths(r.toggles)}</svg>`;
    return `<div class="row${r.sel ? ' sel' : ''}"><span class="name">${r.name}</span><span class="val">${r.val}</span>${svg}</div>`;
  })
  .join('');

let ruler = '<rect y="24" width="429" height="2" fill="#e8f5e8"/>';
for (let i = -2; i < 22; i++) {
  const x = zeroX + i * 2 * cycleW + 0.5;
  ruler += `<path d="M${x} 17V24" stroke="#fff" stroke-width="1.5"/>`;
}
ruler += `<path d="M${zeroX} 0V24M${zeroX + 187} 0V24M${zeroX + 376} 0V24" stroke="#fff"/>`;
ruler += `<text x="${zeroX + 3}" y="17">0</text><text x="${zeroX + 190}" y="17">20</text>`;
document.getElementById('ruler').innerHTML = ruler;
```
